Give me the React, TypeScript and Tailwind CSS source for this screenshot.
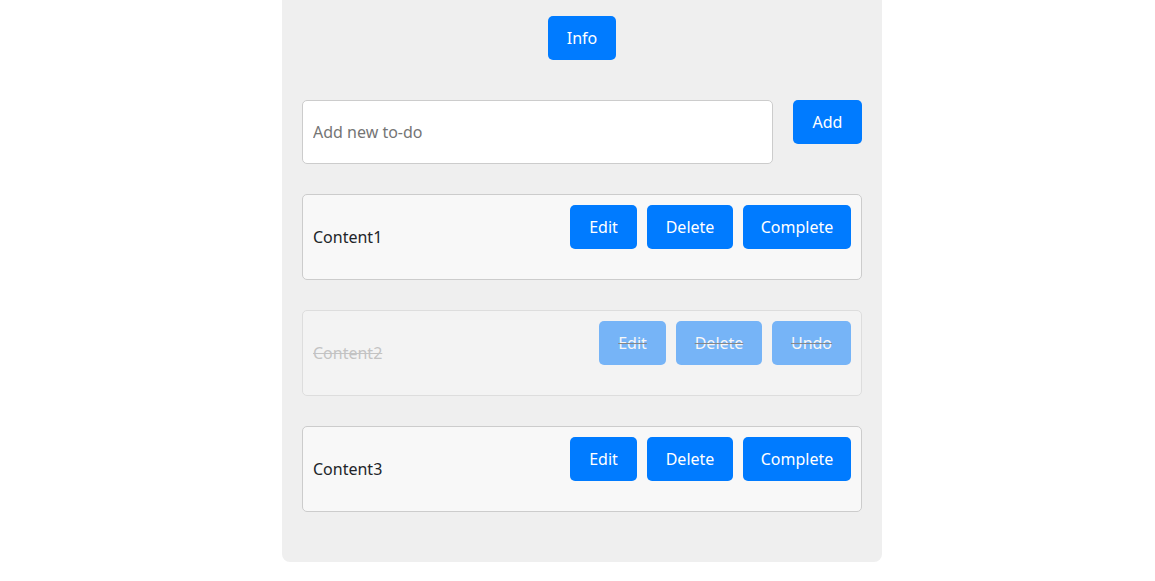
import { useState } from 'react';

type Todo = { id: number; text: string; done: boolean };

const initialTodos: Todo[] = [
  { id: 1, text: 'Content1', done: false },
  { id: 2, text: 'Content2', done: true },
  { id: 3, text: 'Content3', done: false },
];

const btn =
  'h-11 rounded-[5px] bg-[#007bff] text-white text-base flex items-center justify-center';

export default function App() {
  const [todos] = useState(initialTodos);

  return (
    <div className="min-h-screen bg-white pl-[9px] font-['Segoe_UI','Noto_Sans',sans-serif] text-[#212529]">
      <div className="mx-auto w-[600px] bg-[#efefef] rounded-b-lg px-5 pt-4 pb-5">
        {/* Header */}
        <div className="flex justify-center">
          <button className={`${btn} w-[68px]`}>Info</button>
        </div>

        {/* New to-do */}
        <div className="flex items-start gap-5 mt-10 mb-[30px]">
          <input
            placeholder="Add new to-do"
            className="h-16 w-[471px] rounded-[5px] border border-[#cccccc] bg-white px-[10px] text-base placeholder:text-[#757575] outline-none"
          />
          <button className={`${btn} w-[69px]`}>Add</button>
        </div>

        {/* List */}
        <div className="flex flex-col gap-[30px] mb-[30px]">
          {todos.map((todo) => (
            <div
              key={todo.id}
              className={`flex justify-between h-[86px] rounded-[5px] border border-[#cccccc] bg-[#f8f8f8] px-[10px] ${
                todo.done ? 'opacity-50' : ''
              }`}
            >
              <span
                className={`self-center text-base ${
                  todo.done ? 'line-through text-[#999999]' : 'text-[#212529]'
                }`}
              >
                {todo.text}
              </span>
              <div className="flex gap-[10px] self-start pt-[10px]">
                <button className={`${btn} w-[67px] ${todo.done ? 'line-through decoration-[#222]' : ''}`}>
                  Edit
                </button>
                <button className={`${btn} w-[86px] ${todo.done ? 'line-through decoration-[#222]' : ''}`}>
                  Delete
                </button>
                <button
                  className={`${btn} ${todo.done ? 'w-[79px] line-through decoration-[#222]' : 'w-[108px]'}`}
                >
                  {todo.done ? 'Undo' : 'Complete'}
                </button>
              </div>
            </div>
          ))}
        </div>
      </div>
    </div>
  );
}
